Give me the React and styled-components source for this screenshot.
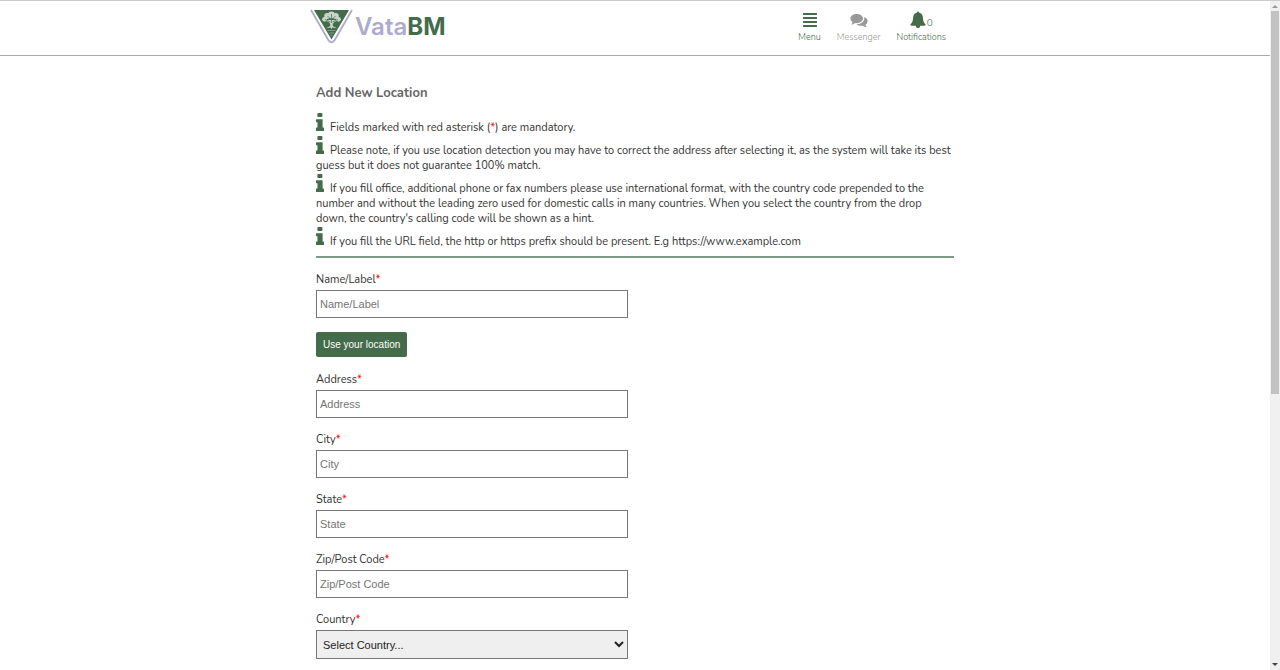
import styled, { createGlobalStyle } from "styled-components";
import { FaAlignJustify } from "react-icons/fa";

const GlobalStyle = createGlobalStyle`
  * {
    box-sizing: border-box;
  }

  body {
    margin: 0;
    background-color: white;
    color: #333;
    font-family: Nunito, Lato, sans-serif;
    font-size: 11px;
    line-height: 15px;
  }
`;

const Screen = styled.div`
  display: flex;
  height: 100vh;
  overflow: hidden;
  border-top: 1px solid #ccc;
`;

const Page = styled.div`
  flex: 1;
  min-width: 0;
  overflow: hidden;
`;

const Header = styled.header`
  height: 55px;
  border-bottom: 1px solid #aaa;
`;

const HeaderInner = styled.div`
  display: flex;
  justify-content: space-between;
  max-width: 650px;
  margin: 0 auto;
  padding: 8px 14px 0 0;
`;

const Brand = styled.a`
  display: flex;
  align-items: flex-start;
  gap: 2px;
  color: #adabcb;
  font-family: Inter, sans-serif;
  font-size: 24px;
  font-weight: 600;
  line-height: 36px;
  text-decoration: none;
`;

const BrandStrong = styled.b`
  color: #446b4a;
  font-weight: 700;
`;

const Nav = styled.nav`
  display: flex;
  gap: 16px;
`;

const NavLink = styled.a`
  display: flex;
  flex-direction: column;
  align-items: center;
  color: ${(props) => (props.$muted ? "#999" : "#446b4a")};
  font-size: 9px;
  font-weight: 300;
  line-height: 12px;
  text-decoration: none;
`;

const NavIcon = styled.span`
  display: flex;
  align-items: center;
  gap: 1px;
  height: 22px;
  font-size: 16px;
`;

const Count = styled.span`
  padding-top: 5px;
  font-size: 10px;
`;

const Main = styled.main`
  max-width: 638px;
  margin: 0 auto;
  padding-top: 28px;
`;

const Title = styled.h1`
  margin: 0 0 10px;
  color: #666;
  font-size: 13px;
  font-weight: 700;
  line-height: 18px;
`;

const Notes = styled.section`
  margin-bottom: 14px;
  padding-bottom: 7px;
  border-bottom: 2px solid #7f9a86;
`;

const Note = styled.p`
  margin: 0;
  padding-top: 1px;
`;

const InfoSvg = styled.svg`
  width: 8px;
  height: 18px;
  margin-right: 6px;
  vertical-align: baseline;
  fill: #446b4a;
`;

const Required = styled.span`
  color: red;
`;

const Field = styled.div`
  margin-bottom: 14px;
`;

const Label = styled.label`
  display: block;
  margin-bottom: 3px;
`;

const Input = styled.input`
  display: block;
  width: 100%;
  max-width: 312px;
  height: 28px;
  padding: 0 3px;
  border: 1px solid #767676;
  border-radius: 0;
  font-family: "Liberation Sans", sans-serif;
  font-size: 11px;

  &::placeholder {
    color: #757575;
  }
`;

const Select = styled.select`
  display: block;
  width: 100%;
  max-width: 312px;
  height: 29px;
  padding: 0 2px;
  border: 1px solid #767676;
  border-radius: 0;
  background-color: #efefef;
  color: #222;
  font-family: "Liberation Sans", sans-serif;
  font-size: 11px;
`;

const Button = styled.button`
  display: block;
  height: 25px;
  margin: 14px 0 15px;
  padding: 0 7px;
  border: 0;
  border-radius: 2px;
  background-color: #446b4a;
  color: white;
  font-family: "Liberation Sans", sans-serif;
  font-size: 10px;
`;

const ScrollTrack = styled.div`
  display: flex;
  flex-direction: column;
  align-items: center;
  width: 10px;
  background-color: #f0f0f0;
`;

const ScrollArrow = styled.svg`
  width: 6px;
  height: 10px;
  fill: ${(props) => props.$color};
`;

const ScrollSpace = styled.div`
  flex: 1;
  width: 8px;
`;

const ScrollThumb = styled.div`
  height: 59%;
  background-color: #c1c1c1;
`;

const fields = [
  { id: "address", label: "Address" },
  { id: "city", label: "City" },
  { id: "state", label: "State" },
  { id: "zip", label: "Zip/Post Code" },
];

const Logo = () => (
  <svg width="43" height="35" viewBox="0 0 43 35" aria-hidden="true">
    <path
      d="M1 1 18.6 31.4Q21.5 35.4 24.4 31.4L42 1"
      fill="none"
      stroke="#adabcb"
      strokeWidth="1.8"
    />
    <path d="M4 1H39L21.5 30.5Z" fill="#446b4a" />
    <g fill="#c9d5cb">
      <circle cx="21.5" cy="6" r="3.4" />
      <circle cx="17.2" cy="7" r="3" />
      <circle cx="25.8" cy="7" r="3" />
      <circle cx="14.5" cy="10.3" r="2.4" />
      <circle cx="28.5" cy="10.3" r="2.4" />
      <path d="M14 11H29L24 13.2 22.8 15V17L27 19.2 22.5 18.5 21.5 20 20.5 18.5 16 19.2 20.2 17V15L19 13.2Z" />
    </g>
    <path
      d="M21.5 5V14M21.5 11 17.5 7M21.5 11 25.5 7M20.5 13 15 10.5M22.5 13 28 10.5"
      fill="none"
      stroke="#446b4a"
      strokeWidth="0.7"
    />
    <path
      d="M17.5 21.5H25.5M19 24H24M20.5 26.3H22.5"
      stroke="#8fa893"
      strokeWidth="0.8"
    />
  </svg>
);

const Bell = () => (
  <svg width="16" height="18" viewBox="0 0 16 18" aria-hidden="true">
    <path
      d="M8 .6Q9.2.6 9.2 1.8 12.6 2.6 12.9 6.4C13.1 10.2 14 12 15.6 13.2Q15.8 14.6 14.6 14.8H10.3Q10.2 17.2 8 17.2T5.7 14.8H1.4Q.2 14.6.4 13.2C2 12 2.9 10.2 3.1 6.4Q3.4 2.6 6.8 1.8 6.8.6 8 .6Z"
      fill="currentColor"
    />
  </svg>
);

const Comments = () => (
  <svg width="18" height="15" viewBox="0 0 18 15" aria-hidden="true">
    <path
      d="M6.7 1C10.2 1 13 3 13 5.6S10.2 10.2 6.7 10.2L5.2 10.1Q3.5 11.6 1.2 11.6 2.3 10.6 2.5 9.1.4 7.8.4 5.6C.4 3 3.2 1 6.7 1Z"
      fill="currentColor"
    />
    <path
      d="M14.2 4.1Q17.6 5.4 17.6 8.3 17.6 10.4 15.5 11.7 15.7 13.2 16.8 14.1 14.5 14.2 12.8 12.7 8.6 13.2 6.4 11.3C11.4 11.3 15 8.5 14.2 4.1Z"
      fill="currentColor"
    />
  </svg>
);

const Info = () => (
  <InfoSvg viewBox="0 0 8 18" aria-hidden="true">
    <rect x="1.4" width="5" height="4" rx="0.8" />
    <path d="M.6 6.2H6.6V14.6H7.4Q8 14.6 8 15.2V17.4Q8 18 7.4 18H.6Q0 18 0 17.4V15.2Q0 14.6 .6 14.6H1.5V9.2H.6Q0 9.2 0 8.6V6.8Q0 6.2.6 6.2Z" />
  </InfoSvg>
);

const TextField = ({ id, label }) => (
  <Field>
    <Label htmlFor={id}>
      {label}
      <Required>*</Required>
    </Label>
    <Input id={id} type="text" placeholder={label} required />
  </Field>
);

const App = () => {
  return (
    <Screen>
      <GlobalStyle />
      <Page>
        <Header>
          <HeaderInner>
            <Brand href="#">
              <Logo />
              <span>
                Vata<BrandStrong>BM</BrandStrong>
              </span>
            </Brand>
            <Nav>
              <NavLink href="#menu">
                <NavIcon>
                  <FaAlignJustify />
                </NavIcon>
                Menu
              </NavLink>
              <NavLink href="#messenger" $muted>
                <NavIcon>
                  <Comments />
                </NavIcon>
                Messenger
              </NavLink>
              <NavLink href="#notifications">
                <NavIcon>
                  <Bell />
                  <Count>0</Count>
                </NavIcon>
                Notifications
              </NavLink>
            </Nav>
          </HeaderInner>
        </Header>
        <Main>
          <Title>Add New Location</Title>
          <Notes>
            <Note>
              <Info />
              Fields marked with red asterisk (<Required>*</Required>) are
              mandatory.
            </Note>
            <Note>
              <Info />
              Please note, if you use location detection you may have to correct
              the address after selecting it, as the system will take its best
              guess but it does not guarantee 100% match.
            </Note>
            <Note>
              <Info />
              If you fill office, additional phone or fax numbers please use
              international format, with the country code prepended to the
              number and without the leading zero used for domestic calls in
              many countries. When you select the country from the drop down,
              the country's calling code will be shown as a hint.
            </Note>
            <Note>
              <Info />
              If you fill the URL field, the http or https prefix should be
              present. E.g https://www.example.com
            </Note>
          </Notes>
          <form>
            <TextField id="name" label="Name/Label" />
            <Button type="button">Use your location</Button>
            {fields.map((field) => (
              <TextField key={field.id} {...field} />
            ))}
            <Field>
              <Label htmlFor="country">
                Country<Required>*</Required>
              </Label>
              <Select id="country" required>
                <option>Select Country...</option>
              </Select>
            </Field>
          </form>
        </Main>
      </Page>
      <ScrollTrack aria-hidden="true">
        <ScrollArrow viewBox="0 0 6 10" $color="#999">
          <path d="M0 7 3 4 6 7Z" />
        </ScrollArrow>
        <ScrollSpace>
          <ScrollThumb />
        </ScrollSpace>
        <ScrollArrow viewBox="0 0 6 10" $color="#444">
          <path d="M0 3 3 6 6 3Z" />
        </ScrollArrow>
      </ScrollTrack>
    </Screen>
  );
};

export default App;
